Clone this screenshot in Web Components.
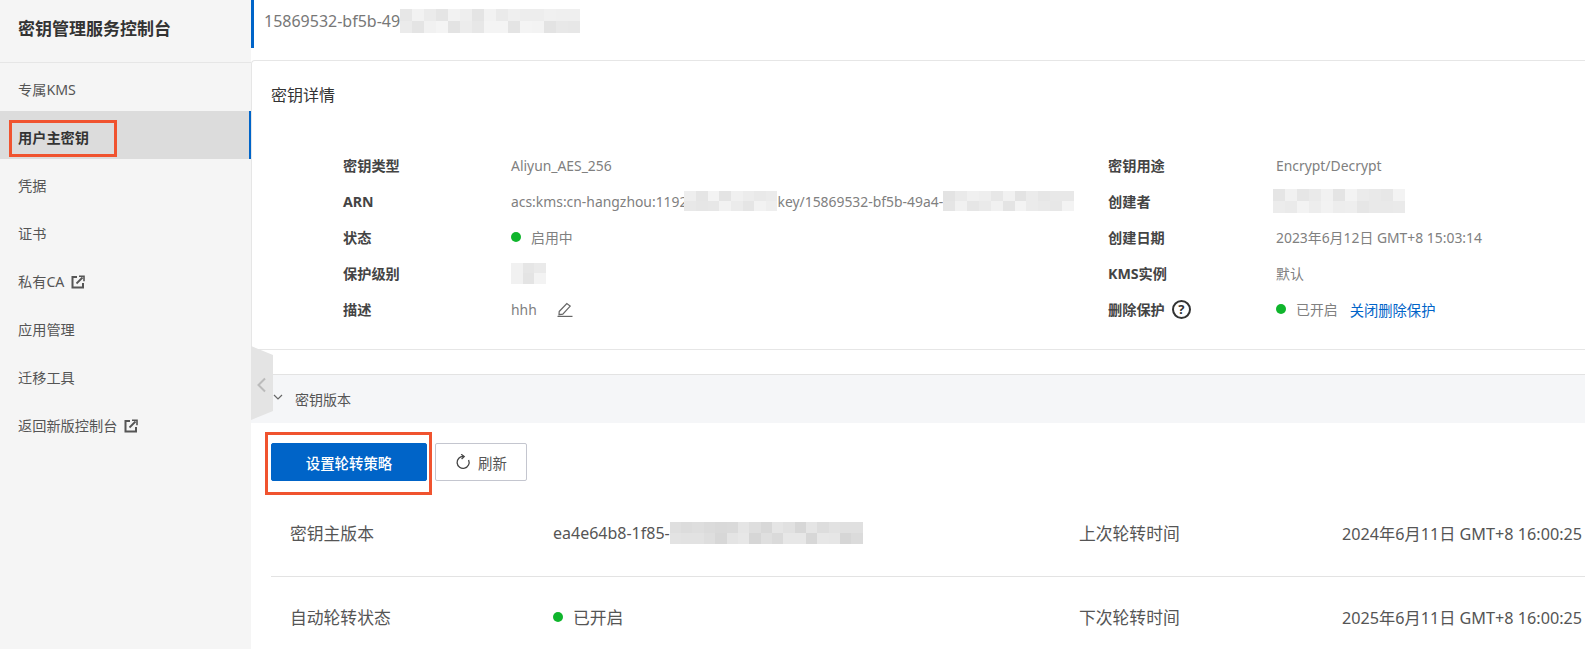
<!DOCTYPE html>
<html lang="zh-CN">
<head>
<meta charset="utf-8">
<title>密钥管理服务控制台</title>
<style>
  html, body { margin: 0; padding: 0; height: 649px; overflow: hidden; background: #fff; }
  body { font-family: "Noto Sans", "Noto Sans CJK SC", sans-serif; color: #333; }
</style>
</head>
<body>
<kms-app>
  <kms-sidebar slot="side" heading="密钥管理服务控制台">
    <kms-nav-item>专属KMS</kms-nav-item>
    <kms-nav-item active marked>用户主密钥</kms-nav-item>
    <kms-nav-item>凭据</kms-nav-item>
    <kms-nav-item>证书</kms-nav-item>
    <kms-nav-item external>私有CA</kms-nav-item>
    <kms-nav-item>应用管理</kms-nav-item>
    <kms-nav-item>迁移工具</kms-nav-item>
    <kms-nav-item external>返回新版控制台</kms-nav-item>
  </kms-sidebar>

  <kms-header>15869532-bf5b-49<blur-mask w="180" h="24" seed="3"></blur-mask></kms-header>

  <kms-detail-card heading="密钥详情">
    <kms-field label="密钥类型">Aliyun_AES_256</kms-field>
    <kms-field label="密钥用途">Encrypt/Decrypt</kms-field>
    <kms-field label="ARN">acs:kms:cn-hangzhou:1192<blur-mask w="93" h="20" seed="7" style="margin-left:-3px"></blur-mask>key/15869532-bf5b-49a4-<blur-mask w="131" h="20" seed="11"></blur-mask></kms-field>
    <kms-field label="创建者"><blur-mask w="132" h="24" seed="5" style="margin-left:-3px"></blur-mask></kms-field>
    <kms-field label="状态"><status-dot>启用中</status-dot></kms-field>
    <kms-field label="创建日期">2023年6月12日 GMT+8 15:03:14</kms-field>
    <kms-field label="保护级别"><blur-mask w="35" h="21" seed="2"></blur-mask></kms-field>
    <kms-field label="KMS实例">默认</kms-field>
    <kms-field label="描述">hhh<edit-icon></edit-icon></kms-field>
    <kms-field label="删除保护" help><status-dot>已开启</status-dot><a-link>关闭删除保护</a-link></kms-field>
  </kms-detail-card>

  <kms-section heading="密钥版本">
    <kms-toolbar>
      <kms-button primary marked>设置轮转策略</kms-button>
      <kms-button refresh>刷新</kms-button>
    </kms-toolbar>
    <kms-version-row>
      <span slot="a">密钥主版本</span>
      <span slot="b">ea4e64b8-1f85-<blur-mask w="193" h="22" seed="13" dark></blur-mask></span>
      <span slot="c">上次轮转时间</span>
      <span slot="d">2024年6月11日 GMT+8 16:00:25</span>
    </kms-version-row>
    <kms-version-row>
      <span slot="a">自动轮转状态</span>
      <span slot="b"><status-dot style="font-size:16.8px">已开启</status-dot></span>
      <span slot="c">下次轮转时间</span>
      <span slot="d">2025年6月11日 GMT+8 16:00:25</span>
    </kms-version-row>
  </kms-section>
</kms-app>

<script>
  const EXTERNAL_ICON = `<svg width="14" height="14" viewBox="0 0 14 14" fill="none" stroke="#555" stroke-width="2">
    <path d="M6 2H1.5v10.5H12V8"/><path d="M5.5 8.5l6-6" stroke-width="1.8"/><path d="M8 1.2h5v5" stroke-width="1.6"/></svg>`;

  class KmsApp extends HTMLElement {
    constructor() {
      super();
      this.attachShadow({mode: 'open'}).innerHTML = `
        <style>
          :host { display: grid; grid-template-columns: 251px 1fr; height: 649px; overflow: hidden; }
          main { min-width: 0; height: 649px; overflow: hidden; position: relative; }
          .handle { position: absolute; left: 0; top: 346px; width: 22px; height: 74px; background: #e4e4e4;
            clip-path: polygon(0 0, 100% 9px, 100% 65px, 0 100%); }
          .handle svg { position: absolute; left: 5px; top: 31px; }
        </style>
        <slot name="side"></slot>
        <main>
          <slot></slot>
          <div class="handle">
            <svg width="12" height="16" viewBox="0 0 12 16" fill="none" stroke="#bbb" stroke-width="2"><path d="M9 1.5L2.5 8 9 14.5"/></svg>
          </div>
        </main>`;
    }
  }

  class KmsSidebar extends HTMLElement {
    constructor() {
      super();
      this.attachShadow({mode: 'open'}).innerHTML = `
        <style>
          :host { display: block; background: #f5f5f5; box-sizing: border-box; height: 649px; }
          h1 { margin: 0; height: 62px; line-height: 58px; padding-left: 18px; font-size: 17px; font-weight: 700;
            color: #333; border-bottom: 1px solid #e6e6e6; box-sizing: content-box; white-space: nowrap; }
        </style>
        <h1></h1>
        <slot></slot>`;
      this.shadowRoot.querySelector('h1').textContent = this.getAttribute('heading');
    }
  }

  class KmsNavItem extends HTMLElement {
    constructor() {
      super();
      const ext = this.hasAttribute('external') ? `<span class="ext">${EXTERNAL_ICON}</span>` : '';
      const mark = this.hasAttribute('marked') ? '<mark-box style="left:9px;top:9px;width:108px;height:37px"></mark-box>' : '';
      this.attachShadow({mode: 'open'}).innerHTML = `
        <style>
          :host { display: flex; align-items: center; height: 48px; box-sizing: border-box; padding: 3px 0 0 18px;
            font-size: 14.2px; color: #555; position: relative; white-space: nowrap; }
          :host([active]) { background: #dcdcdc; border-right: 2px solid #0064c8; color: #333; font-weight: 700; }
          .ext { display: inline-flex; margin-left: 7px; margin-top: 2px; }
        </style>
        <slot></slot>${ext}${mark}`;
    }
  }

  class MarkBox extends HTMLElement {
    constructor() {
      super();
      this.attachShadow({mode: 'open'}).innerHTML = `
        <style>
          :host { display: block; position: absolute; box-sizing: border-box; border: 3px solid #f0532f; pointer-events: none; }
        </style>`;
    }
  }

  class KmsHeader extends HTMLElement {
    constructor() {
      super();
      this.attachShadow({mode: 'open'}).innerHTML = `
        <style>
          :host { display: flex; align-items: center; height: 48px; margin: 0 0 12px 0; padding-left: 10px;
            padding-bottom: 6px; box-sizing: border-box; border-left: 3px solid #0064c8;
            font-size: 16px; color: #777; white-space: nowrap; }
        </style>
        <slot></slot>`;
    }
  }

  class BlurMask extends HTMLElement {
    constructor() {
      super();
      const w = +this.getAttribute('w'), h = +this.getAttribute('h');
      let s = +this.getAttribute('seed') || 1;
      const low = this.hasAttribute('dark') ? 214 : 227;
      const cell = 12, cols = Math.ceil(w / cell), rows = Math.ceil(h / cell);
      let cells = '';
      for (let i = 0; i < cols * rows; i++) {
        s = (s * 73 + 41) % 101;
        const v = low + (s % 18);
        cells += `<i style="background:rgb(${v},${v},${v})"></i>`;
      }
      this.attachShadow({mode: 'open'}).innerHTML = `
        <style>
          :host { display: inline-grid; flex: none; width: ${w}px; height: ${h}px; overflow: hidden; vertical-align: middle;
            grid-template-columns: repeat(${cols}, 1fr); grid-template-rows: repeat(${rows}, 1fr); }
        </style>${cells}`;
    }
  }

  class KmsDetailCard extends HTMLElement {
    constructor() {
      super();
      this.attachShadow({mode: 'open'}).innerHTML = `
        <style>
          :host { display: block; height: 290px; box-sizing: border-box; border: 1px solid #e6e6e6; border-right: 0;
            border-top-left-radius: 4px; background: #fff; }
          h2 { margin: 0; padding: 22px 0 0 19px; height: 86px; box-sizing: border-box; font-size: 16px; font-weight: 400;
            line-height: 24px; color: #333; }
          .grid { display: grid; grid-template-columns: 765px 1fr; grid-auto-rows: 36px; padding-left: 91px; }
        </style>
        <h2></h2>
        <div class="grid"><slot></slot></div>`;
      this.shadowRoot.querySelector('h2').textContent = this.getAttribute('heading');
    }
  }

  class KmsField extends HTMLElement {
    constructor() {
      super();
      const help = this.hasAttribute('help')
        ? '<span class="help">?</span>' : '';
      this.attachShadow({mode: 'open'}).innerHTML = `
        <style>
          :host { display: flex; align-items: center; height: 36px; white-space: nowrap; font-size: 13.9px; color: #808080; }
          .label { flex: none; width: 168px; display: flex; align-items: center; font-size: 14.2px; font-weight: 700; color: #444; }
          .help { display: inline-flex; align-items: center; justify-content: center; width: 19px; height: 19px; box-sizing: border-box;
            margin-left: 7px; border: 2px solid #333; border-radius: 50%; font-size: 13px; font-weight: 700; color: #333; }
        </style>
        <div class="label"><span class="t"></span>${help}</div>
        <slot></slot>`;
      this.shadowRoot.querySelector('.t').textContent = this.getAttribute('label');
    }
  }

  class StatusDot extends HTMLElement {
    constructor() {
      super();
      this.attachShadow({mode: 'open'}).innerHTML = `
        <style>
          :host { display: inline-flex; align-items: center; gap: 10px; }
          i { width: 10px; height: 10px; border-radius: 50%; background: #0fb52c; }
        </style>
        <i></i><slot></slot>`;
    }
  }

  class ALink extends HTMLElement {
    constructor() {
      super();
      this.attachShadow({mode: 'open'}).innerHTML = `
        <style>:host { display: inline-block; margin-left: 12px; font-size: 14.3px; color: #0064c8; cursor: pointer; }</style><slot></slot>`;
    }
  }

  class EditIcon extends HTMLElement {
    constructor() {
      super();
      this.attachShadow({mode: 'open'}).innerHTML = `
        <style>:host { display: inline-flex; margin-left: 20px; }</style>
        <svg width="16" height="15" viewBox="0 0 16 15" fill="none" stroke="#666" stroke-width="1.2">
          <path d="M2.2 9.5L9.8 1.5l3.4 2.6-7.4 8-3.8.6z"/><path d="M.5 14.4h15"/>
        </svg>`;
    }
  }

  class KmsSection extends HTMLElement {
    constructor() {
      super();
      this.attachShadow({mode: 'open'}).innerHTML = `
        <style>
          :host { display: block; margin-top: 24px; }
          .head { display: flex; align-items: center; height: 49px; box-sizing: border-box; padding: 0 0 0 22px;
            background: #f5f6f8; border-top: 1px solid #e3e3e3; font-size: 14px; color: #555; }
          svg { margin-right: 12px; margin-top: -4px; }
          .body { padding: 20px 0 0 20px; }
        </style>
        <div class="head">
          <svg width="10" height="6" viewBox="0 0 10 6" fill="none" stroke="#666" stroke-width="1.2"><path d="M1 1l4 4 4-4"/></svg>
          <span class="t"></span>
        </div>
        <div class="body"><slot></slot></div>`;
      this.shadowRoot.querySelector('.t').textContent = this.getAttribute('heading');
    }
  }

  class KmsToolbar extends HTMLElement {
    constructor() {
      super();
      this.attachShadow({mode: 'open'}).innerHTML = `
        <style>:host { display: flex; gap: 8px; }</style><slot></slot>`;
    }
  }

  class KmsButton extends HTMLElement {
    constructor() {
      super();
      const icon = this.hasAttribute('refresh') ? `<svg width="16" height="16" viewBox="0 0 16 16" fill="none" stroke="#444" stroke-width="1.3">
        <path d="M8.5 2.4A6 6 0 1 0 13.6 6"/><path d="M6.2 .3L9.2 2.5 6.6 5"/></svg>` : '';
      const mark = this.hasAttribute('marked') ? '<mark-box style="left:-7px;top:-12px;width:167px;height:63px"></mark-box>' : '';
      this.attachShadow({mode: 'open'}).innerHTML = `
        <style>
          :host { display: inline-flex; align-items: center; justify-content: center; gap: 7px; height: 38px; box-sizing: border-box;
            position: relative; border-radius: 2px; font-size: 14.4px; border: 1px solid #c4c6cf; background: #fff; color: #555; width: 92px; }
          :host([primary]) { width: 156px; background: #0064c8; border-color: #0064c8; color: #fff; font-weight: 500; }
        </style>
        ${icon}<slot></slot>${mark}`;
    }
  }

  class KmsVersionRow extends HTMLElement {
    constructor() {
      super();
      this.attachShadow({mode: 'open'}).innerHTML = `
        <style>
          :host { display: grid; grid-template-columns: 263px 526px 263px 1fr; align-items: center; height: 79px; box-sizing: border-box;
            padding-left: 19px; font-size: 16.8px; color: #555; white-space: nowrap; }
          :host(:first-of-type) { height: 86px; padding-bottom: 2px; margin-top: 10px; border-bottom: 1px solid #e3e3e3; }
          ::slotted(span) { display: flex; align-items: center; }
          ::slotted([slot="d"]) { font-size: 16.2px; }
          ::slotted([slot="b"]) { font-size: 16px; }
        </style>
        <slot name="a"></slot><slot name="b"></slot><slot name="c"></slot><slot name="d"></slot>`;
    }
  }

  customElements.define('kms-app', KmsApp);
  customElements.define('kms-sidebar', KmsSidebar);
  customElements.define('kms-nav-item', KmsNavItem);
  customElements.define('mark-box', MarkBox);
  customElements.define('kms-header', KmsHeader);
  customElements.define('blur-mask', BlurMask);
  customElements.define('kms-detail-card', KmsDetailCard);
  customElements.define('kms-field', KmsField);
  customElements.define('status-dot', StatusDot);
  customElements.define('a-link', ALink);
  customElements.define('edit-icon', EditIcon);
  customElements.define('kms-section', KmsSection);
  customElements.define('kms-toolbar', KmsToolbar);
  customElements.define('kms-button', KmsButton);
  customElements.define('kms-version-row', KmsVersionRow);
</script>
</body>
</html>
